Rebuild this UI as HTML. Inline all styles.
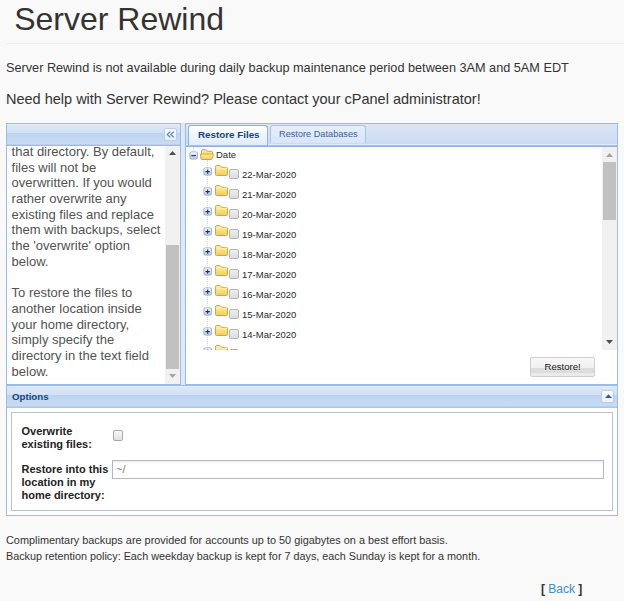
<!DOCTYPE html>
<html><head><meta charset="utf-8">
<style>
*{margin:0;padding:0;box-sizing:border-box}
html,body{width:624px;height:601px;overflow:hidden;background:#f9f9f9;font-family:"Liberation Sans",sans-serif;color:#333}
.a{position:absolute;white-space:nowrap}
.t{line-height:1}
#h1{left:14.2px;top:3.1px;font-size:32px;color:#333}
#hr{left:6px;top:43px;width:618px;height:1px;background:#eee}
#p1{left:6px;top:62.3px;font-size:12.7px}
#p2{left:6px;top:92.2px;font-size:14.5px}
/* panels */
.pb{border:1px solid #99bbe8}
#gap{left:181px;top:123px;width:4px;height:262px;background:#dfe8f6}
#lp{left:6px;top:123px;width:175px;height:262px;background:#fff}
#lph{left:0;top:0;width:173px;height:22px;background:linear-gradient(#e3ecf8 0,#e3ecf8 1px,#dce7f6 1px,#d2e1f5 9px,#bad1ef 9px,#bad1ef 10px,#bfd4f0 10px,#c7dbf3 20px,#b9cfee 20px,#b9cfee 21px);border-bottom:1px solid #99bbe8}
#coll{left:157px;top:4px;width:13px;height:13px;background:linear-gradient(#f7fafe,#e6effb);border:1px solid #b9cff0;border-radius:2px}
#lpb{left:0;top:22px;width:173px;height:238px;overflow:hidden;background:#fff}
#ltxt{left:4.6px;top:-2px;font-size:13px;line-height:15.68px;color:#525252;white-space:pre}
.sb{background:#f1f1f1}
.thumb{background:#c1c1c1}
#rp{left:185px;top:123px;width:433px;height:262px;background:#fff}
#tabs{left:0;top:0;width:431px;height:23px;background:linear-gradient(#dce6f5 0,#cbdbf2 20px,#deecfd 20px,#deecfd 21px,#a3c2ea 21px);border-bottom:1px solid #8db2e3}
#tab1{left:2px;top:1px;width:80px;height:20px;background:linear-gradient(#ffffff,#deecfd);border:1px solid #8db2e3;border-bottom:none;border-radius:3px 3px 0 0}
#tab2{left:84px;top:1px;width:96px;height:18px;background:linear-gradient(#e6effb,#d6e5f8);border:1px solid #a9c4e8;border-bottom:none;border-radius:3px 3px 0 0}
#tree{left:0;top:23px;width:431px;height:203px;background:#fff;overflow:hidden}
.row{position:absolute;left:0;height:20px;width:400px}
.dt{position:absolute;font-size:9.5px;line-height:1;color:#2a2a2a;white-space:nowrap}
#opt{left:6px;top:385px;width:612px;height:131px;background:#fff}
#opth{left:0;top:0;width:610px;height:23px;background:linear-gradient(#e3ecf8 0,#e3ecf8 1px,#dce7f6 1px,#d2e1f5 9px,#bad1ef 9px,#bad1ef 10px,#bfd4f0 10px,#c7dbf3 20px,#b9cfee 20px,#b9cfee 21px);border-top:1px solid #99bbe8;border-bottom:1px solid #a9c6ec}
#fs{left:4px;top:27px;width:602px;height:99px;border:1px solid #bcbfcd;background:#fff}
.lbl{font-weight:bold;font-size:11px;line-height:13px;color:#222;white-space:pre}
#foot1{left:6px;top:534.9px;font-size:10.9px}
#foot2{left:6px;top:550.9px;font-size:10.8px}
#back{left:541px;top:583.3px;font-size:12px}
</style></head><body>
<div id="h1" class="a t">Server Rewind</div>
<div id="hr" class="a"></div>
<div id="p1" class="a t">Server Rewind is not available during daily backup maintenance period between 3AM and 5AM EDT</div>
<div id="p2" class="a t">Need help with Server Rewind? Please contact your cPanel administrator!</div>

<div id="gap" class="a"></div>
<div id="lp" class="a pb">
  <div id="lph" class="a"><div id="coll" class="a"><svg width="11" height="11" viewBox="0 0 11 11" style="position:absolute;left:0;top:0"><path d="M5.3 2.6L2.3 5.5L5.3 8.4M8.8 2.6L5.8 5.5L8.8 8.4" fill="none" stroke="#5587cc" stroke-width="1.3"/></svg></div></div>
  <div id="lpb" class="a">
    <div id="ltxt" class="a">that directory. By default,
files will not be
overwritten. If you would
rather overwrite any
existing files and replace
them with backups, select
the 'overwrite' option
below.

To restore the files to
another location inside
your home directory,
simply specify the
directory in the text field
below.</div>
    <div class="a sb" style="left:158px;top:0;width:15px;height:238px"></div>
    <div class="a thumb" style="left:159px;top:99px;width:13px;height:124px"></div>
    <svg class="a" style="left:162px;top:5px" width="7" height="4" viewBox="0 0 7 4"><path d="M0 4L3.5 0L7 4Z" fill="#505050"/></svg><svg class="a" style="left:162px;top:228px" width="7" height="4" viewBox="0 0 7 4"><path d="M0 0L3.5 4L7 0Z" fill="#a3a3a3"/></svg>
  </div>
</div>

<div id="rp" class="a pb">
  <div id="tabs" class="a">
    <div id="tab1" class="a"></div>
    <div id="tab2" class="a"></div>
    <div class="a t" style="left:12px;top:6px;font-size:9.8px;font-weight:bold;color:#15428b">Restore Files</div>
    <div class="a t" style="left:93px;top:6px;font-size:9.2px;color:#3c6297">Restore Databases</div>
  </div>
  <div id="tree" class="a">
<svg width="0" height="0" style="position:absolute"><defs><linearGradient id="gb" x1="0" y1="0" x2="0" y2="1"><stop offset="0" stop-color="#f6f9fd"/><stop offset="1" stop-color="#bccbe0"/></linearGradient><linearGradient id="gf" x1="0" y1="0" x2="0" y2="1"><stop offset="0" stop-color="#fff2a8"/><stop offset="1" stop-color="#f2cd52"/></linearGradient></defs></svg>
<div class="a" style="left:7px;top:0;width:1px;height:4px;border-left:1px dotted #d6d6d6"></div>
<div class="a" style="left:21px;top:13px;width:1px;height:200px;border-left:1px dotted #d6d6d6"></div>
<svg class="a" style="left:3px;top:3.5px" width="10" height="10" viewBox="0 0 10 10"><rect x="0.5" y="0.5" width="8.3" height="8.1" rx="1.8" fill="#8ea6c7"/><rect x="1.35" y="1.35" width="6.6" height="6.4" rx="1" fill="url(#gb)"/><path d="M2.3 4.6H7" stroke="#2a4670" stroke-width="1.3"/></svg>
<svg class="a" style="left:14px;top:2px" width="14" height="11" viewBox="0 0 14 11"><path d="M1.5 8V2Q1.5 0.5 3 0.5H5.5Q6.1 0.5 6.5 1L7.5 2.3H11.5Q12.5 2.3 12.5 3.3V5" fill="#f7e39a" stroke="#d4a43c"/><path d="M0.5 5H12.8Q13.6 5 13.4 5.9L12.1 9.6Q11.8 10.5 10.9 10.5H1.8Q1 10.5 0.9 9.7Z" fill="url(#gf)" stroke="#d4a43c"/></svg>
<div class="dt" style="left:30px;top:2.5px">Date</div>
<svg class="a" style="left:17px;top:19.5px" width="10" height="10" viewBox="0 0 10 10"><rect x="0.5" y="0.5" width="8.3" height="8.1" rx="1.8" fill="#8ea6c7"/><rect x="1.35" y="1.35" width="6.6" height="6.4" rx="1" fill="url(#gb)"/><path d="M2.5 4.6H6.8M4.65 2.5V6.7" stroke="#1b3361" stroke-width="1.1"/></svg>
<svg class="a" style="left:29px;top:18px" width="13" height="11" viewBox="0 0 13 11"><path d="M0.5 2.5V9.5Q0.5 10.5 1.5 10.5H11.5Q12.5 10.5 12.5 9.5V3.5Q12.5 2.5 11.5 2.5H6.5L5.5 1Q5.1 0.5 4.5 0.5H1.8Q0.5 0.5 0.5 2Z" fill="url(#gf)" stroke="#d4a43c"/><path d="M1 3.1H12" stroke="#fff6c8" stroke-width="0.7"/></svg>
<div class="a" style="left:43px;top:22px;width:10px;height:10px;border:1px solid #b3b3b3;border-radius:2px;background:linear-gradient(#eeeeee,#dcdcdc)"></div>
<div class="dt" style="left:56px;top:23px">22-Mar-2020</div>
<svg class="a" style="left:17px;top:39.5px" width="10" height="10" viewBox="0 0 10 10"><rect x="0.5" y="0.5" width="8.3" height="8.1" rx="1.8" fill="#8ea6c7"/><rect x="1.35" y="1.35" width="6.6" height="6.4" rx="1" fill="url(#gb)"/><path d="M2.5 4.6H6.8M4.65 2.5V6.7" stroke="#1b3361" stroke-width="1.1"/></svg>
<svg class="a" style="left:29px;top:38px" width="13" height="11" viewBox="0 0 13 11"><path d="M0.5 2.5V9.5Q0.5 10.5 1.5 10.5H11.5Q12.5 10.5 12.5 9.5V3.5Q12.5 2.5 11.5 2.5H6.5L5.5 1Q5.1 0.5 4.5 0.5H1.8Q0.5 0.5 0.5 2Z" fill="url(#gf)" stroke="#d4a43c"/><path d="M1 3.1H12" stroke="#fff6c8" stroke-width="0.7"/></svg>
<div class="a" style="left:43px;top:42px;width:10px;height:10px;border:1px solid #b3b3b3;border-radius:2px;background:linear-gradient(#eeeeee,#dcdcdc)"></div>
<div class="dt" style="left:56px;top:43px">21-Mar-2020</div>
<svg class="a" style="left:17px;top:59.5px" width="10" height="10" viewBox="0 0 10 10"><rect x="0.5" y="0.5" width="8.3" height="8.1" rx="1.8" fill="#8ea6c7"/><rect x="1.35" y="1.35" width="6.6" height="6.4" rx="1" fill="url(#gb)"/><path d="M2.5 4.6H6.8M4.65 2.5V6.7" stroke="#1b3361" stroke-width="1.1"/></svg>
<svg class="a" style="left:29px;top:58px" width="13" height="11" viewBox="0 0 13 11"><path d="M0.5 2.5V9.5Q0.5 10.5 1.5 10.5H11.5Q12.5 10.5 12.5 9.5V3.5Q12.5 2.5 11.5 2.5H6.5L5.5 1Q5.1 0.5 4.5 0.5H1.8Q0.5 0.5 0.5 2Z" fill="url(#gf)" stroke="#d4a43c"/><path d="M1 3.1H12" stroke="#fff6c8" stroke-width="0.7"/></svg>
<div class="a" style="left:43px;top:62px;width:10px;height:10px;border:1px solid #b3b3b3;border-radius:2px;background:linear-gradient(#eeeeee,#dcdcdc)"></div>
<div class="dt" style="left:56px;top:63px">20-Mar-2020</div>
<svg class="a" style="left:17px;top:79.5px" width="10" height="10" viewBox="0 0 10 10"><rect x="0.5" y="0.5" width="8.3" height="8.1" rx="1.8" fill="#8ea6c7"/><rect x="1.35" y="1.35" width="6.6" height="6.4" rx="1" fill="url(#gb)"/><path d="M2.5 4.6H6.8M4.65 2.5V6.7" stroke="#1b3361" stroke-width="1.1"/></svg>
<svg class="a" style="left:29px;top:78px" width="13" height="11" viewBox="0 0 13 11"><path d="M0.5 2.5V9.5Q0.5 10.5 1.5 10.5H11.5Q12.5 10.5 12.5 9.5V3.5Q12.5 2.5 11.5 2.5H6.5L5.5 1Q5.1 0.5 4.5 0.5H1.8Q0.5 0.5 0.5 2Z" fill="url(#gf)" stroke="#d4a43c"/><path d="M1 3.1H12" stroke="#fff6c8" stroke-width="0.7"/></svg>
<div class="a" style="left:43px;top:82px;width:10px;height:10px;border:1px solid #b3b3b3;border-radius:2px;background:linear-gradient(#eeeeee,#dcdcdc)"></div>
<div class="dt" style="left:56px;top:83px">19-Mar-2020</div>
<svg class="a" style="left:17px;top:99.5px" width="10" height="10" viewBox="0 0 10 10"><rect x="0.5" y="0.5" width="8.3" height="8.1" rx="1.8" fill="#8ea6c7"/><rect x="1.35" y="1.35" width="6.6" height="6.4" rx="1" fill="url(#gb)"/><path d="M2.5 4.6H6.8M4.65 2.5V6.7" stroke="#1b3361" stroke-width="1.1"/></svg>
<svg class="a" style="left:29px;top:98px" width="13" height="11" viewBox="0 0 13 11"><path d="M0.5 2.5V9.5Q0.5 10.5 1.5 10.5H11.5Q12.5 10.5 12.5 9.5V3.5Q12.5 2.5 11.5 2.5H6.5L5.5 1Q5.1 0.5 4.5 0.5H1.8Q0.5 0.5 0.5 2Z" fill="url(#gf)" stroke="#d4a43c"/><path d="M1 3.1H12" stroke="#fff6c8" stroke-width="0.7"/></svg>
<div class="a" style="left:43px;top:102px;width:10px;height:10px;border:1px solid #b3b3b3;border-radius:2px;background:linear-gradient(#eeeeee,#dcdcdc)"></div>
<div class="dt" style="left:56px;top:103px">18-Mar-2020</div>
<svg class="a" style="left:17px;top:119.5px" width="10" height="10" viewBox="0 0 10 10"><rect x="0.5" y="0.5" width="8.3" height="8.1" rx="1.8" fill="#8ea6c7"/><rect x="1.35" y="1.35" width="6.6" height="6.4" rx="1" fill="url(#gb)"/><path d="M2.5 4.6H6.8M4.65 2.5V6.7" stroke="#1b3361" stroke-width="1.1"/></svg>
<svg class="a" style="left:29px;top:118px" width="13" height="11" viewBox="0 0 13 11"><path d="M0.5 2.5V9.5Q0.5 10.5 1.5 10.5H11.5Q12.5 10.5 12.5 9.5V3.5Q12.5 2.5 11.5 2.5H6.5L5.5 1Q5.1 0.5 4.5 0.5H1.8Q0.5 0.5 0.5 2Z" fill="url(#gf)" stroke="#d4a43c"/><path d="M1 3.1H12" stroke="#fff6c8" stroke-width="0.7"/></svg>
<div class="a" style="left:43px;top:122px;width:10px;height:10px;border:1px solid #b3b3b3;border-radius:2px;background:linear-gradient(#eeeeee,#dcdcdc)"></div>
<div class="dt" style="left:56px;top:123px">17-Mar-2020</div>
<svg class="a" style="left:17px;top:139.5px" width="10" height="10" viewBox="0 0 10 10"><rect x="0.5" y="0.5" width="8.3" height="8.1" rx="1.8" fill="#8ea6c7"/><rect x="1.35" y="1.35" width="6.6" height="6.4" rx="1" fill="url(#gb)"/><path d="M2.5 4.6H6.8M4.65 2.5V6.7" stroke="#1b3361" stroke-width="1.1"/></svg>
<svg class="a" style="left:29px;top:138px" width="13" height="11" viewBox="0 0 13 11"><path d="M0.5 2.5V9.5Q0.5 10.5 1.5 10.5H11.5Q12.5 10.5 12.5 9.5V3.5Q12.5 2.5 11.5 2.5H6.5L5.5 1Q5.1 0.5 4.5 0.5H1.8Q0.5 0.5 0.5 2Z" fill="url(#gf)" stroke="#d4a43c"/><path d="M1 3.1H12" stroke="#fff6c8" stroke-width="0.7"/></svg>
<div class="a" style="left:43px;top:142px;width:10px;height:10px;border:1px solid #b3b3b3;border-radius:2px;background:linear-gradient(#eeeeee,#dcdcdc)"></div>
<div class="dt" style="left:56px;top:143px">16-Mar-2020</div>
<svg class="a" style="left:17px;top:159.5px" width="10" height="10" viewBox="0 0 10 10"><rect x="0.5" y="0.5" width="8.3" height="8.1" rx="1.8" fill="#8ea6c7"/><rect x="1.35" y="1.35" width="6.6" height="6.4" rx="1" fill="url(#gb)"/><path d="M2.5 4.6H6.8M4.65 2.5V6.7" stroke="#1b3361" stroke-width="1.1"/></svg>
<svg class="a" style="left:29px;top:158px" width="13" height="11" viewBox="0 0 13 11"><path d="M0.5 2.5V9.5Q0.5 10.5 1.5 10.5H11.5Q12.5 10.5 12.5 9.5V3.5Q12.5 2.5 11.5 2.5H6.5L5.5 1Q5.1 0.5 4.5 0.5H1.8Q0.5 0.5 0.5 2Z" fill="url(#gf)" stroke="#d4a43c"/><path d="M1 3.1H12" stroke="#fff6c8" stroke-width="0.7"/></svg>
<div class="a" style="left:43px;top:162px;width:10px;height:10px;border:1px solid #b3b3b3;border-radius:2px;background:linear-gradient(#eeeeee,#dcdcdc)"></div>
<div class="dt" style="left:56px;top:163px">15-Mar-2020</div>
<svg class="a" style="left:17px;top:179.5px" width="10" height="10" viewBox="0 0 10 10"><rect x="0.5" y="0.5" width="8.3" height="8.1" rx="1.8" fill="#8ea6c7"/><rect x="1.35" y="1.35" width="6.6" height="6.4" rx="1" fill="url(#gb)"/><path d="M2.5 4.6H6.8M4.65 2.5V6.7" stroke="#1b3361" stroke-width="1.1"/></svg>
<svg class="a" style="left:29px;top:178px" width="13" height="11" viewBox="0 0 13 11"><path d="M0.5 2.5V9.5Q0.5 10.5 1.5 10.5H11.5Q12.5 10.5 12.5 9.5V3.5Q12.5 2.5 11.5 2.5H6.5L5.5 1Q5.1 0.5 4.5 0.5H1.8Q0.5 0.5 0.5 2Z" fill="url(#gf)" stroke="#d4a43c"/><path d="M1 3.1H12" stroke="#fff6c8" stroke-width="0.7"/></svg>
<div class="a" style="left:43px;top:182px;width:10px;height:10px;border:1px solid #b3b3b3;border-radius:2px;background:linear-gradient(#eeeeee,#dcdcdc)"></div>
<div class="dt" style="left:56px;top:183px">14-Mar-2020</div>
<svg class="a" style="left:17px;top:199.5px" width="10" height="10" viewBox="0 0 10 10"><rect x="0.5" y="0.5" width="8.3" height="8.1" rx="1.8" fill="#8ea6c7"/><rect x="1.35" y="1.35" width="6.6" height="6.4" rx="1" fill="url(#gb)"/><path d="M2.5 4.6H6.8M4.65 2.5V6.7" stroke="#1b3361" stroke-width="1.1"/></svg>
<svg class="a" style="left:29px;top:198px" width="13" height="11" viewBox="0 0 13 11"><path d="M0.5 2.5V9.5Q0.5 10.5 1.5 10.5H11.5Q12.5 10.5 12.5 9.5V3.5Q12.5 2.5 11.5 2.5H6.5L5.5 1Q5.1 0.5 4.5 0.5H1.8Q0.5 0.5 0.5 2Z" fill="url(#gf)" stroke="#d4a43c"/><path d="M1 3.1H12" stroke="#fff6c8" stroke-width="0.7"/></svg>
<div class="a" style="left:43px;top:202px;width:10px;height:10px;border:1px solid #b3b3b3;border-radius:2px;background:linear-gradient(#eeeeee,#dcdcdc)"></div>
<div class="dt" style="left:56px;top:203px">13-Mar-2020</div>
    <div class="a sb" style="left:416px;top:0;width:15px;height:203px"></div>
    <div class="a thumb" style="left:417px;top:15px;width:13px;height:58px"></div>
    <svg class="a" style="left:420px;top:6px" width="7" height="4" viewBox="0 0 7 4"><path d="M0 4L3.5 0L7 4Z" fill="#a3a3a3"/></svg><svg class="a" style="left:420px;top:193px" width="7" height="4" viewBox="0 0 7 4"><path d="M0 0L3.5 4L7 0Z" fill="#505050"/></svg>
  </div>
  <div class="a" style="left:344px;top:233px;width:65px;height:20px;border:1px solid #cfcfcf;border-radius:2px;background:linear-gradient(#f8f8f8 0,#f0f0f0 55%,#dedede 56%,#dcdcdc 82%,#ebebeb 83%,#ebebeb 100%)"></div>
  <div class="a t" style="left:358.5px;top:238.2px;font-size:9.6px;color:#222">Restore!</div>
</div>

<div id="opt" class="a pb" style="border-top:none">
  <div id="opth" class="a">
    <div class="a t" style="left:5px;top:6px;font-size:9.7px;font-weight:bold;color:#15428b">Options</div>
    <div class="a" style="left:594px;top:4px;width:13px;height:13px;background:linear-gradient(#fbfdff,#e9f1fc);border:1px solid #b5cdef;border-radius:2px"><svg class="a" style="left:2.6px;top:3px" width="7" height="4" viewBox="0 0 7 4"><path d="M0 4L3.5 0.2L7 4Z" fill="#2b5aa8"/></svg></div>
  </div>
  <div id="fs" class="a">
    <div class="a lbl" style="left:9.5px;top:11.5px">Overwrite
existing files:</div>
    <div class="a" style="left:100.8px;top:17.2px;width:10.5px;height:10.5px;border:1px solid #a8a8a8;border-radius:2px;background:linear-gradient(#f6f6f6,#e2e2e2)"></div>
    <div class="a lbl" style="left:9.5px;top:49.7px">Restore into this
location in my
home directory:</div>
    <div class="a" style="left:100.3px;top:47px;width:491.7px;height:19px;border:1px solid #b5b8c8;background:linear-gradient(#ececec 0,#fafafa 2px,#fff 3px)"></div>
    <div class="a t" style="left:104px;top:51px;font-size:11px;color:#777">~/</div>
  </div>
</div>

<div id="foot1" class="a t">Complimentary backups are provided for accounts up to 50 gigabytes on a best effort basis.</div>
<div id="foot2" class="a t">Backup retention policy: Each weekday backup is kept for 7 days, each Sunday is kept for a month.</div>
<div id="back" class="a t"><b style="color:#333">[ </b><span style="color:#428bca">Back</span><b style="color:#333"> ]</b></div>
</body></html>
